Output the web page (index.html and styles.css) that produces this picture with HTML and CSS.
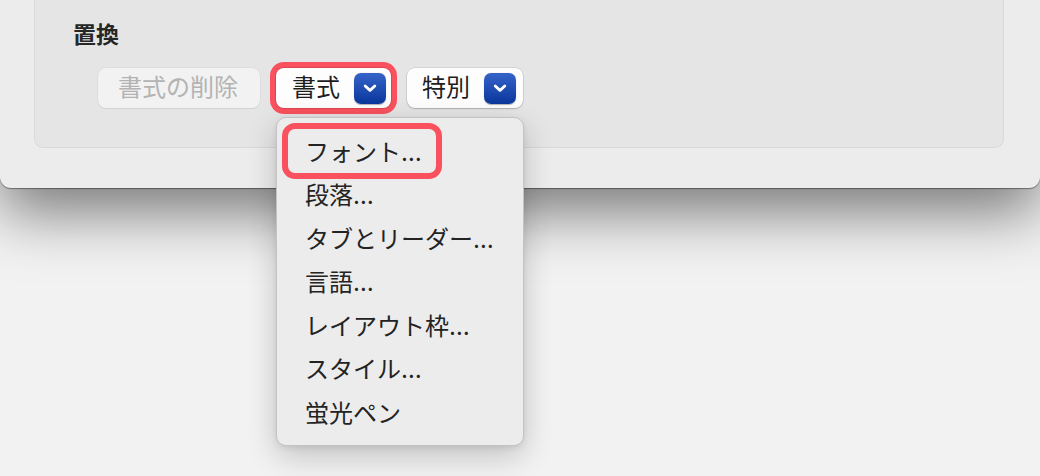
FILE: index.html
```html
<!DOCTYPE html>
<html lang="ja">
<head>
<meta charset="utf-8">
<link rel="stylesheet" href="styles.css">
</head>
<body>
<div class="window">
  <div class="panel">
    <div class="title">置換</div>
    <div class="row">
      <div class="btn disabled">書式の削除</div>
      <div class="popup ring w115">
        <span class="label">書式</span>
        <span class="arrow"><svg width="14" height="9" viewBox="0 0 14 9"><path d="M2.2 2 L7 6.4 L11.8 2" fill="none" stroke="#fff" stroke-width="2.8" stroke-linecap="round" stroke-linejoin="round"/></svg></span>
      </div>
      <div class="popup w116">
        <span class="label">特別</span>
        <span class="arrow"><svg width="14" height="9" viewBox="0 0 14 9"><path d="M2.2 2 L7 6.4 L11.8 2" fill="none" stroke="#fff" stroke-width="2.8" stroke-linecap="round" stroke-linejoin="round"/></svg></span>
      </div>
    </div>
  </div>
</div>
<div class="menu">
  <div class="hl"></div>
  <div class="item">フォント…</div>
  <div class="item">段落…</div>
  <div class="item">タブとリーダー…</div>
  <div class="item">言語…</div>
  <div class="item">レイアウト枠…</div>
  <div class="item">スタイル…</div>
  <div class="item">蛍光ペン</div>
</div>
</body>
</html>
```
FILE: styles.css
```css
* { box-sizing: border-box; }
html, body {
  margin: 0;
  width: 1040px;
  height: 476px;
  overflow: hidden;
  background: #f2f2f2;
  font-family: "Inter", "Noto Sans CJK JP", "Noto Sans", sans-serif;
  color: #222;
}
.window {
  width: 1040px;
  height: 188px;
  background: #ececec;
  border-radius: 0 0 11px 11px;
  padding: 0 36px 0 34px;
  box-shadow: 0 24px 60px rgba(0,0,0,0.5), 0 1px 1px rgba(0,0,0,0.4);
  position: relative;
}
.panel {
  height: 148px;
  background: #e5e5e5;
  border: 1px solid #d9d9d9;
  border-top: none;
  border-radius: 0 0 9px 9px;
  padding: 24px 0 0 38px;
}
.title {
  font-size: 23px;
  line-height: 23px;
  font-weight: 700;
  color: #262626;
}
.row {
  display: flex;
  align-items: center;
  gap: 16px;
  margin: 21px 0 0 25px;
}
.btn, .popup {
  height: 40px;
  border-radius: 8px;
  font-size: 24px;
  line-height: 40px;
}
.btn.disabled {
  width: 162px;
  padding-left: 20px;
  background: #f2f2f2;
  color: #b3b3b3;
  box-shadow: 0 0 0 0.5px rgba(0,0,0,0.06), 0 1px 1px rgba(0,0,0,0.06);
}
.popup {
  display: flex;
  align-items: center;
  justify-content: space-between;
  padding: 0 5px 0 16px;
  background: #fdfdfd;
  color: #1e1e1e;
  box-shadow: 0 0 0 0.5px rgba(0,0,0,0.14), 0 1px 1.5px rgba(0,0,0,0.18);
}
.w115 { width: 115px; }
.w116 { width: 116px; padding-left: 15px; padding-right: 7px; }
.popup.ring {
  box-shadow: 0 0 0 1px rgba(0,0,0,0.12), 0 0 0 6px #f9515e;
}
.arrow {
  width: 32px;
  height: 31px;
  border-radius: 7px;
  background: linear-gradient(#3563c9, #0b379b);
  display: flex;
  align-items: center;
  justify-content: center;
  box-shadow: 0 0.5px 1px rgba(0,0,0,0.3);
}
.arrow svg { display: block; }
.menu {
  position: absolute;
  left: 276px;
  top: 117px;
  width: 248px;
  height: 329px;
  background: #ececec;
  border: 1px solid #c3c3c3;
  border-radius: 10px;
  padding-top: 12.5px;
  box-shadow: 0 10px 30px rgba(0,0,0,0.2), 0 2px 6px rgba(0,0,0,0.08);
}
.item {
  height: 43.5px;
  line-height: 43.5px;
  padding-left: 28px;
  font-size: 24px;
  color: #232323;
  white-space: nowrap;
}
.hl {
  position: absolute;
  left: 5px;
  top: 5px;
  width: 160px;
  height: 56px;
  border: 6px solid #f9515e;
  border-radius: 13px;
}
```
